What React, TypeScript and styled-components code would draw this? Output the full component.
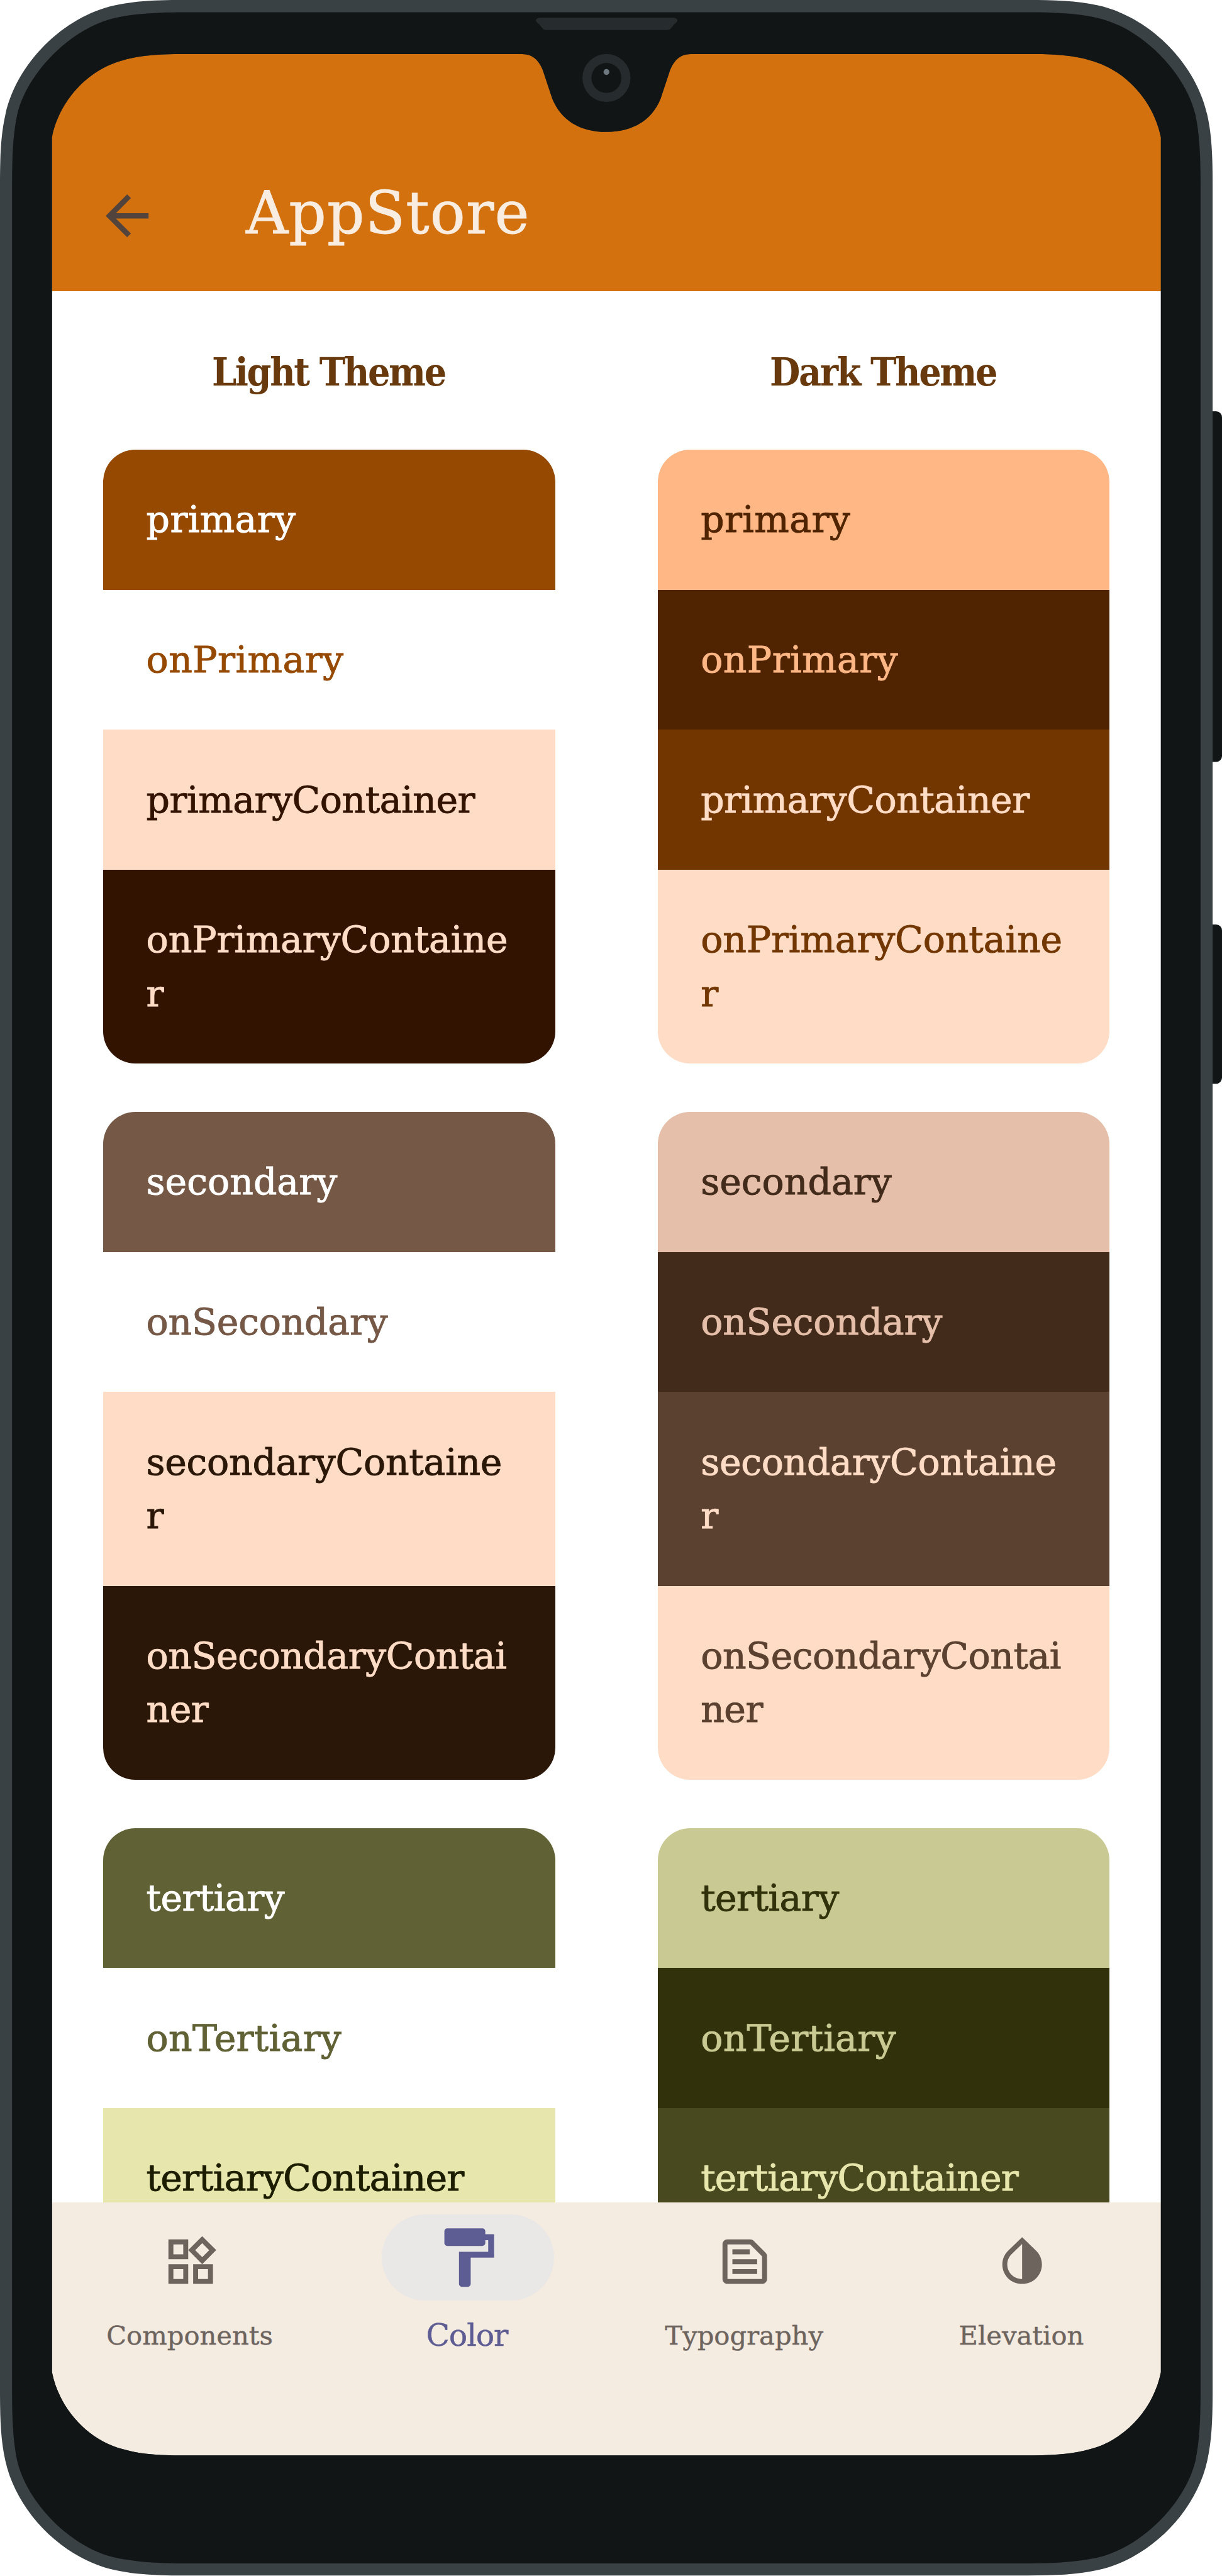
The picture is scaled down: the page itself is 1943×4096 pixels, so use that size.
import React from 'react';
import styled, { createGlobalStyle } from 'styled-components';

const GlobalStyle = createGlobalStyle`
  * { box-sizing: border-box; }
  html, body { margin: 0; padding: 0; background: #ffffff; }
  body { font-family: "Roboto Slab", "DejaVu Serif", serif; }
`;

const Device = styled.div`
  position: relative;
  width: 1943px;
  height: 4096px;
  overflow: hidden;
  padding: 86px 97px 192px 82.7px;
`;

const Screen = styled.main`
  display: flex;
  flex-direction: column;
  width: 1763.2px;
  height: 3818px;
  background: #ffffff;
`;

const FrameArt = styled.svg`
  position: absolute;
  inset: 0;
  width: 1943px;
  height: 4096px;
  pointer-events: none;
`;

const AppBar = styled.header`
  display: flex;
  align-items: flex-end;
  flex: none;
  height: 376.5px;
  padding: 0 0 68.6px 68px;
  background: #d2710e;
`;

const BackButton = styled.button`
  display: flex;
  padding: 0;
  border: 0;
  background: none;
  color: #52443c;
`;

const Title = styled.h1`
  margin: 0 0 -4.6px 138px;
  font-size: 93px;
  line-height: 120px;
  font-weight: 400;
  letter-spacing: 1.1px;
  -webkit-text-stroke: 0.8px currentColor;
  color: #f9ede1;
`;

const Content = styled.section`
  display: flex;
  flex: none;
  height: 3039px;
  overflow: hidden;
`;

const Column = styled.div`
  display: flex;
  flex-direction: column;
  flex: 1 1 0;
  min-width: 0;
  padding: 83px 81.5px 0 81.3px;
`;

const ThemeName = styled.h2`
  flex: none;
  margin: 0 0 78.8px;
  padding-right: 2px;
  height: 91px;
  line-height: 91px;
  font-family: "Roboto Slab", "DejaVu Serif Condensed", "DejaVu Serif", serif;
  font-stretch: condensed;
  font-size: 62px;
  font-weight: 700;
  letter-spacing: -2.4px;
  text-align: center;
  color: #69390e;
`;

const Card = styled.div`
  flex: none;
  margin-bottom: 77.1px;
  border-radius: 51px;
  overflow: hidden;
`;

const Swatch = styled.div<{ $bg: string; $fg: string; $track: number }>`
  padding: 69.2px 40px 67.8px 68.6px;
  background: ${(p) => p.$bg};
  color: ${(p) => p.$fg};
  font-size: 58.5px;
  line-height: 85.6px;
  letter-spacing: ${(p) => p.$track}px;
  -webkit-text-stroke: 0.9px currentColor;
  white-space: pre-line;
`;

const NavBar = styled.nav`
  display: flex;
  flex: 1;
  background: #f4ebe1;
`;

const NavItem = styled.a<{ $active?: boolean }>`
  display: flex;
  flex-direction: column;
  align-items: center;
  flex: 1 1 0;
  padding-top: 19.6px;
  color: ${(p) => (p.$active ? '#5d5c93' : '#6d645e')};
`;

const Indicator = styled.span<{ $active?: boolean }>`
  display: flex;
  align-items: center;
  justify-content: center;
  width: 274.5px;
  height: 137.3px;
  padding-top: ${(p) => (p.$active ? 0 : 12)}px;
  border-radius: 69px;
  background: ${(p) => (p.$active ? '#e9e8e6' : 'transparent')};
`;

const NavLabel = styled.span<{ $active?: boolean }>`
  margin-top: 24px;
  padding-right: 3px;
  line-height: 64px;
  font-size: ${(p) => (p.$active ? 49 : 41.7)}px;
  letter-spacing: ${(p) => (p.$active ? -1.2 : 0)}px;
  -webkit-text-stroke: 0.4px currentColor;
`;

const Glyph = ({ d, size }: { d: string; size: number }) => (
  <svg width={size} height={size} viewBox="0 0 24 24" fill="currentColor" aria-hidden="true">
    <path d={d} />
  </svg>
);

const BACK = 'M20 11H7.83l5.59-5.59L12 4l-8 8 8 8 1.41-1.41L7.83 13H20v-2z';
const WIDGETS =
  'M16.66 4.52l2.83 2.83-2.83 2.83-2.83-2.83 2.83-2.83M9 5v4H5V5h4m10 10v4h-4v-4h4M9 15v4H5v-4h4m7.66-13.31L11 7.34 16.66 13l5.66-5.66-5.66-5.65zM11 3H3v8h8V3zm10 10h-8v8h8v-8zm-10 0H3v8h8v-8z';
const PAINT =
  'M18 4V3c0-.55-.45-1-1-1H5c-.55 0-1 .45-1 1v4c0 .55.45 1 1 1h12c.55 0 1-.45 1-1V6h1v4H9v11c0 .55.45 1 1 1h2c.55 0 1-.45 1-1v-9h8V4h-3z';
const SNIPPET =
  'M14.17 5L19 9.83V19H5V5h9.17m0-2H5c-1.1 0-2 .9-2 2v14c0 1.1.9 2 2 2h14c1.1 0 2-.9 2-2V9.83c0-.53-.21-1.04-.59-1.41l-4.83-4.83c-.37-.38-.88-.59-1.41-.59zM7 15h10v2H7v-2zm0-4h10v2H7v-2zm0-4h7v2H7V7z';
const DROP =
  'M12 4.81V19c-3.31 0-6-2.63-6-5.87 0-1.56.62-3.03 1.75-4.14L12 4.81M12 2.1L6.35 7.56C4.9 8.99 4 10.96 4 13.13 4 17.48 7.58 21 12 21s8-3.52 8-7.87c0-2.17-.9-4.14-2.35-5.57L12 2.1z';

type Tone = { label: string; bg: string; fg: string };
type Scheme = { name: string; cards: Tone[][] };

const tracking: Record<string, number> = {
  primary: 0.35,
  onPrimary: 0.4,
  primaryContainer: -0.5,
  'onPrimaryContaine\nr': -0.15,
  secondary: 0,
  onSecondary: -0.25,
  'secondaryContaine\nr': -0.3,
  'onSecondaryContai\nner': -0.5,
  tertiary: -0.6,
  onTertiary: 0.25,
  tertiaryContainer: -0.85,
};

const schemes: Scheme[] = [
  {
    name: 'Light Theme',
    cards: [
      [
        { label: 'primary', bg: '#964900', fg: '#ffffff' },
        { label: 'onPrimary', bg: '#ffffff', fg: '#964900' },
        { label: 'primaryContainer', bg: '#ffdcc6', fg: '#311300' },
        { label: 'onPrimaryContaine\nr', bg: '#311300', fg: '#ffdcc6' },
      ],
      [
        { label: 'secondary', bg: '#755846', fg: '#ffffff' },
        { label: 'onSecondary', bg: '#ffffff', fg: '#755846' },
        { label: 'secondaryContaine\nr', bg: '#ffdcc6', fg: '#2b1708' },
        { label: 'onSecondaryContai\nner', bg: '#2b1708', fg: '#ffdcc6' },
      ],
      [
        { label: 'tertiary', bg: '#606134', fg: '#ffffff' },
        { label: 'onTertiary', bg: '#ffffff', fg: '#606134' },
        { label: 'tertiaryContainer', bg: '#e6e6ad', fg: '#1c1d00' },
      ],
    ],
  },
  {
    name: 'Dark Theme',
    cards: [
      [
        { label: 'primary', bg: '#ffb786', fg: '#502400' },
        { label: 'onPrimary', bg: '#502400', fg: '#ffb786' },
        { label: 'primaryContainer', bg: '#723600', fg: '#ffdcc6' },
        { label: 'onPrimaryContaine\nr', bg: '#ffdcc6', fg: '#723600' },
      ],
      [
        { label: 'secondary', bg: '#e5bfa9', fg: '#422b1b' },
        { label: 'onSecondary', bg: '#422b1b', fg: '#e5bfa9' },
        { label: 'secondaryContaine\nr', bg: '#5b4130', fg: '#ffdcc6' },
        { label: 'onSecondaryContai\nner', bg: '#ffdcc6', fg: '#5b4130' },
      ],
      [
        { label: 'tertiary', bg: '#c9ca93', fg: '#31320b' },
        { label: 'onTertiary', bg: '#31320b', fg: '#c9ca93' },
        { label: 'tertiaryContainer', bg: '#48491f', fg: '#e6e6ad' },
      ],
    ],
  },
];

const tabs = [
  { label: 'Components', icon: WIDGETS, active: false },
  { label: 'Color', icon: PAINT, active: true },
  { label: 'Typography', icon: SNIPPET, active: false },
  { label: 'Elevation', icon: DROP, active: false },
];

const BODY =
  'M0 348C0 295 1 254 10 214C31 118 118 31 214 10C254 1 295 0 345 0H1916.5C1966.5 0 2007.5 1 2047.5 10C2143.5 31 2230.5 118 2251.5 214C2260.5 254 2261.5 295 2261.5 348V4455C2261.5 4508 2260.5 4549 2251.5 4589C2230.5 4685 2143.5 4772 2047.5 4793C2007.5 4802 1966.5 4803 1916.5 4803H345C295 4803 254 4802 214 4793C118 4772 31 4685 10 4589C1 4549 0 4508 0 4455Z';
const BEZEL =
  'M22.5 345C22.5 300 23.5 254 32 214C51 134 134 51 216 33C254 25 295 23 345 23H1916.5C1966.5 23 2007.5 25 2045.5 33C2127.5 51 2210.5 134 2229.5 214C2238 254 2239 300 2239 345V4458C2239 4503 2238 4549 2229.5 4589C2210.5 4669 2127.5 4752 2045.5 4770C2007.5 4778 1966.5 4780.5 1916.5 4780.5H345C295 4780.5 254 4778 216 4770C134 4752 51 4669 32 4589C23.5 4549 22.5 4503 22.5 4458Z';
const GLASS =
  'M97 256C110 190 162 130 229 112.5C258 104 290 101 334 101H974C992 101 1004 111 1012 130L1030 184C1046 223 1080 246 1131 246C1182 246 1216 223 1232 184L1250 130C1258 111 1270 101 1288 101H1928C1972 101 2004 104 2033 112.5C2100 130 2152 190 2165 256V4424C2152 4490 2100 4550 2033 4567.5C2004 4576 1972 4579 1928 4579H334C290 4579 258 4576 229 4567.5C162 4550 110 4490 97 4424Z';

const DeviceFrame = () => (
  <FrameArt viewBox="0 0 2279 4804" preserveAspectRatio="none" aria-hidden="true">
    <path d="M2261 767H2268A11 11 0 0 1 2279 778V1410A11 11 0 0 1 2268 1421H2261Z" fill="#111515" />
    <path d="M2261 1724H2268A11 11 0 0 1 2279 1735V2010A11 11 0 0 1 2268 2021H2261Z" fill="#111515" />
    <path d={BODY + GLASS} fillRule="evenodd" fill="#3a4144" />
    <path d={BEZEL + GLASS} fillRule="evenodd" fill="#111515" />
    <path
      d="M1008 33H1255C1264 33 1266 39 1260 43C1256 46 1254 50 1251 53Q1249 56 1245 56H1018Q1014 56 1012 53C1009 50 1007 46 1003 43C997 39 999 33 1008 33Z"
      fill="#262b2e"
    />
    <circle cx="1131" cy="145.4" r="44.8" fill="#262b2e" />
    <circle cx="1131" cy="145.4" r="28" fill="#111515" />
    <circle cx="1131" cy="134.3" r="5.5" fill="#6c787d" />
  </FrameArt>
);

export default function App() {
  return (
    <>
      <GlobalStyle />
      <Device>
        <Screen>
          <AppBar>
            <BackButton aria-label="Back">
              <Glyph d={BACK} size={102.3} />
            </BackButton>
            <Title>AppStore</Title>
          </AppBar>
          <Content>
            {schemes.map((scheme) => (
              <Column key={scheme.name}>
                <ThemeName>{scheme.name}</ThemeName>
                {scheme.cards.map((card) => (
                  <Card key={card[0].label}>
                    {card.map((tone) => (
                      <Swatch key={tone.label} $bg={tone.bg} $fg={tone.fg} $track={tracking[tone.label]}>
                        {tone.label}
                      </Swatch>
                    ))}
                  </Card>
                ))}
              </Column>
            ))}
          </Content>
          <NavBar>
            {tabs.map((tab) => (
              <NavItem key={tab.label} $active={tab.active}>
                <Indicator $active={tab.active}>
                  <Glyph d={tab.icon} size={tab.active ? 111.5 : 94.4} />
                </Indicator>
                <NavLabel $active={tab.active}>{tab.label}</NavLabel>
              </NavItem>
            ))}
          </NavBar>
        </Screen>
        <DeviceFrame />
      </Device>
    </>
  );
}
